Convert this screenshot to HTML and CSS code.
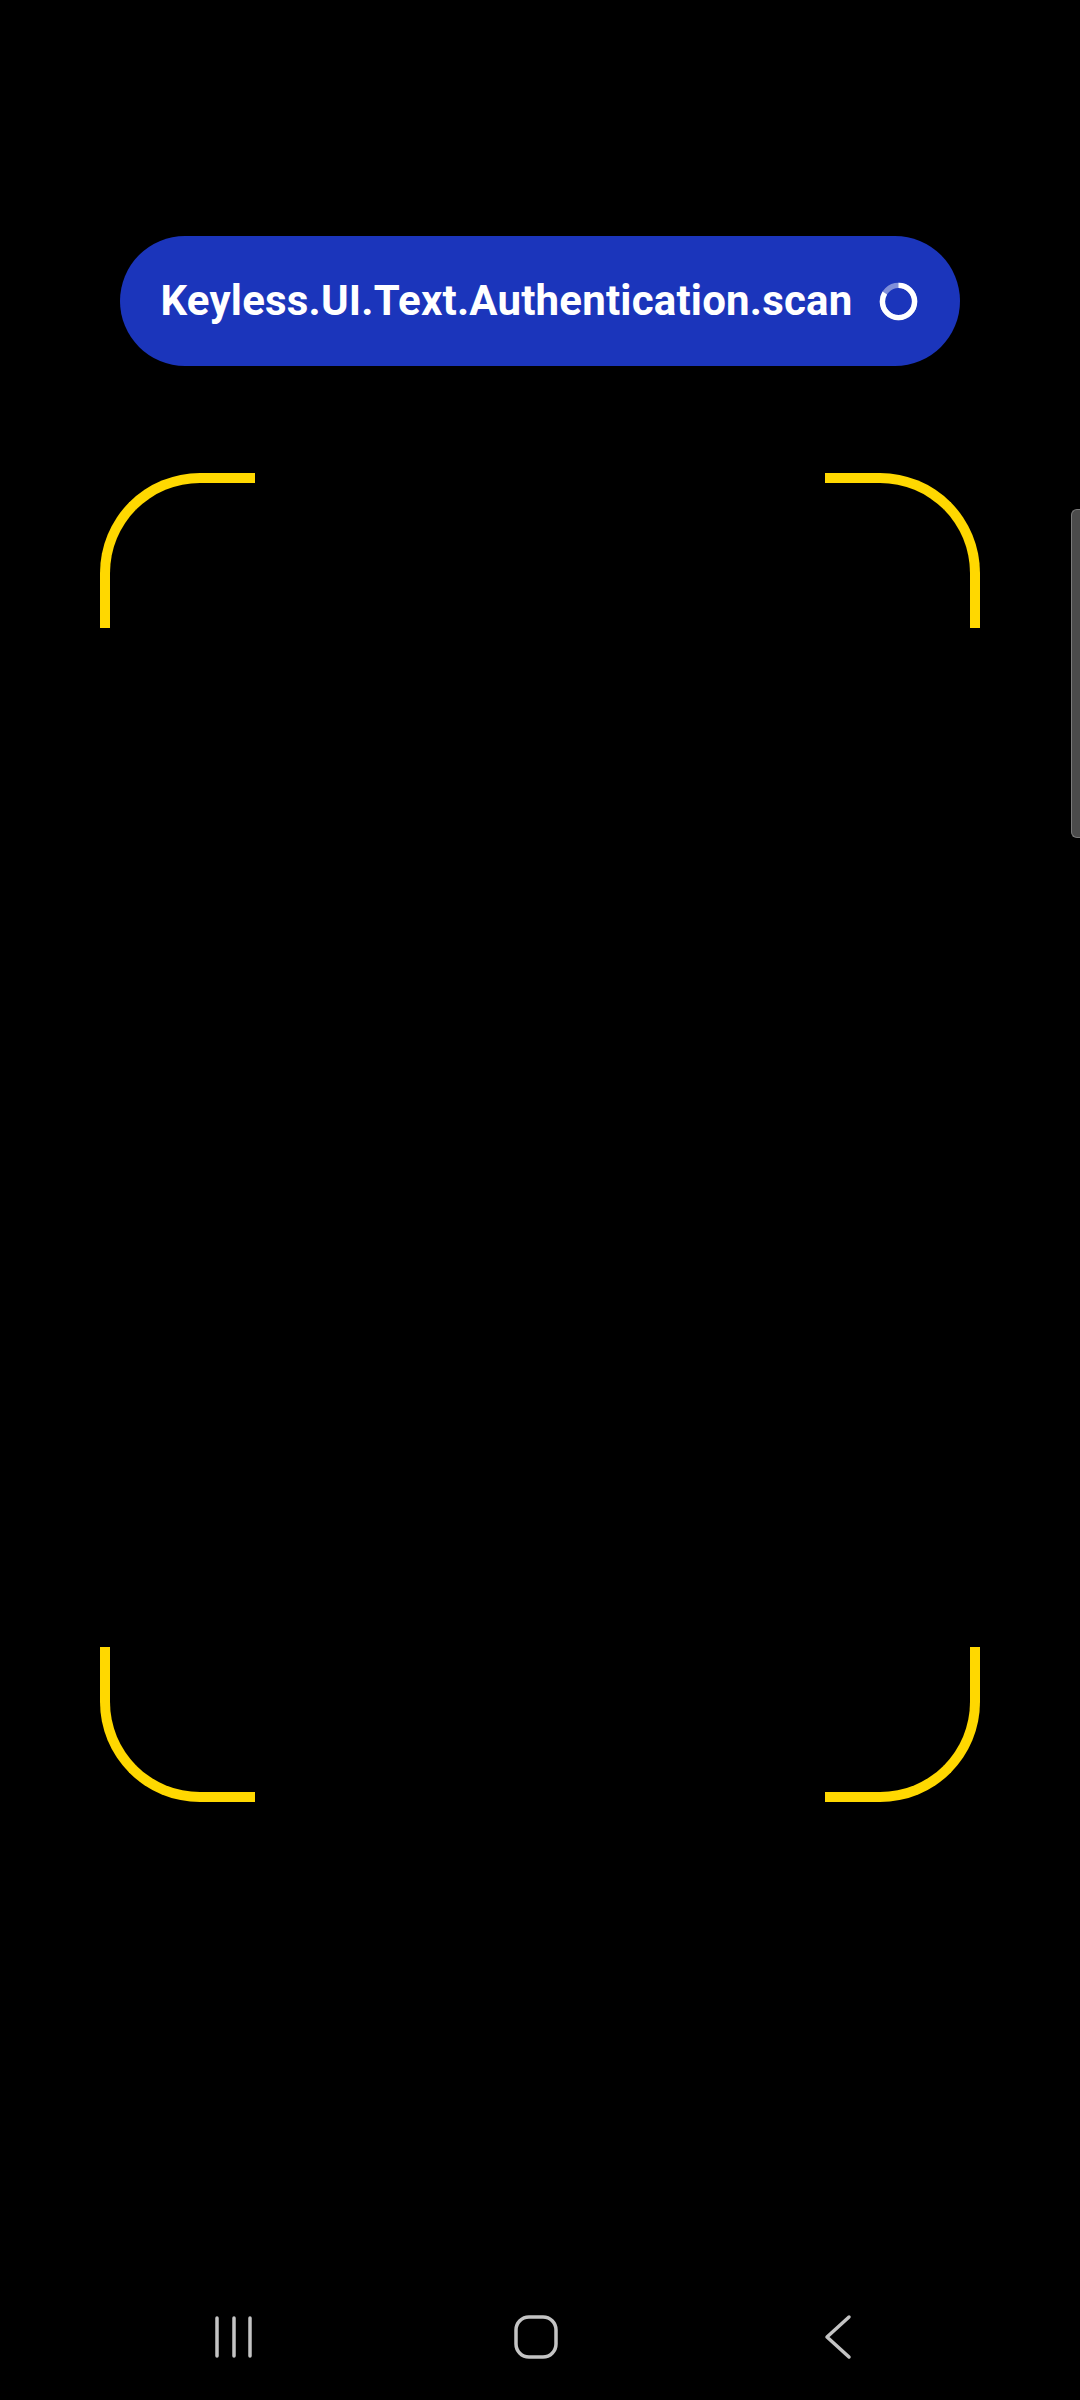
FILE: index.html
```html
<!DOCTYPE html>
<html lang="en">
<head>
    <meta charset="UTF-8">
    <meta name="viewport" content="width=device-width, initial-scale=1.0">
    <title>Authentication scan</title>
    <link rel="stylesheet" href="styles.css">
</head>
<body>
    <div class="screen">
        <!-- Scan content -->
        <main class="scan">
            <div class="scan-status">
                <span class="scan-label">Keyless.UI.Text.Authentication.scan</span>
                <svg class="spinner" viewBox="0 0 40 40" width="39" height="39">
                    <circle cx="20" cy="20" r="16.5" fill="none" stroke="rgba(255,255,255,0.45)" stroke-width="5.5"/>
                    <circle cx="20" cy="20" r="16.5" fill="none" stroke="#fff" stroke-width="5.5"
                            stroke-dasharray="86.4 200" transform="rotate(-90 20 20)"/>
                </svg>
            </div>

            <!-- Face frame -->
            <div class="frame">
                <div class="frame-row">
                    <div class="corner corner-tl"></div>
                    <div class="corner corner-tr"></div>
                </div>
                <div class="frame-row">
                    <div class="corner corner-bl"></div>
                    <div class="corner corner-br"></div>
                </div>
            </div>
        </main>

        <!-- Edge panel handle -->
        <div class="edge-handle"></div>

        <!-- Navigation bar -->
        <nav class="navbar">
            <div class="nav-slot">
                <svg width="40" height="44" viewBox="0 0 40 44">
                    <g stroke="#c4c4c4" stroke-width="3.5" stroke-linecap="round">
                        <line x1="3" y1="3" x2="3" y2="41"/>
                        <line x1="20" y1="3" x2="20" y2="41"/>
                        <line x1="36" y1="3" x2="36" y2="41"/>
                    </g>
                </svg>
            </div>
            <div class="nav-slot">
                <svg width="46" height="46" viewBox="0 0 46 46">
                    <rect x="3" y="3" width="40" height="40" rx="13" fill="none" stroke="#c4c4c4" stroke-width="3.5"/>
                </svg>
            </div>
            <div class="nav-slot">
                <svg width="30" height="46" viewBox="0 0 30 46">
                    <polyline points="26,3 4,23 26,43" fill="none" stroke="#c4c4c4" stroke-width="3.5"
                              stroke-linecap="round" stroke-linejoin="round"/>
                </svg>
            </div>
        </nav>
    </div>
</body>
</html>
```

FILE: styles.css
```css
/* Global Styles */
* {
    box-sizing: border-box;
    margin: 0;
    padding: 0;
}

body {
    font-family: Roboto, "Liberation Sans", sans-serif;
    background-color: #000;
    color: #fff;
}

.screen {
    position: relative;
    min-height: 2400px;
    display: flex;
    flex-direction: column;
}

/* Scan Styles */
.scan {
    flex: 1;
    display: flex;
    flex-direction: column;
    align-items: center;
    padding-top: 236px;
}

.scan-status {
    height: 130px;
    padding: 0 42px 0 41px;
    display: flex;
    align-items: center;
    gap: 27px;
    background-color: #1b35bb;
    border-radius: 65px;
}

.scan-label {
    font-size: 42px;
    font-weight: 700;
    letter-spacing: 0.2px;
    line-height: 1;
}

.spinner {
    display: block;
}

/* Frame Styles */
.frame {
    width: 880px;
    height: 1329px;
    margin-top: 107px;
    display: flex;
    flex-direction: column;
    justify-content: space-between;
}

.frame-row {
    display: flex;
    justify-content: space-between;
}

.corner {
    width: 155px;
    height: 155px;
    border: 0 solid #ffd800;
}

.corner-tl {
    border-top-width: 10px;
    border-left-width: 10px;
    border-top-left-radius: 100px;
}

.corner-tr {
    border-top-width: 10px;
    border-right-width: 10px;
    border-top-right-radius: 100px;
}

.corner-bl {
    border-bottom-width: 10px;
    border-left-width: 10px;
    border-bottom-left-radius: 100px;
}

.corner-br {
    border-bottom-width: 10px;
    border-right-width: 10px;
    border-bottom-right-radius: 100px;
}

/* Edge handle */
.edge-handle {
    position: absolute;
    top: 509px;
    right: 0;
    width: 9px;
    height: 329px;
    background-color: #4b4b4b;
    border: 1px solid #7a7a7a;
    border-right: none;
    border-radius: 6px 0 0 6px;
}

/* Navbar Styles */
.navbar {
    height: 126px;
    padding-right: 8px;
    display: flex;
    justify-content: center;
    align-items: center;
}

.nav-slot {
    width: 302px;
    display: flex;
    justify-content: center;
    align-items: center;
}

.nav-slot svg {
    display: block;
}
```
